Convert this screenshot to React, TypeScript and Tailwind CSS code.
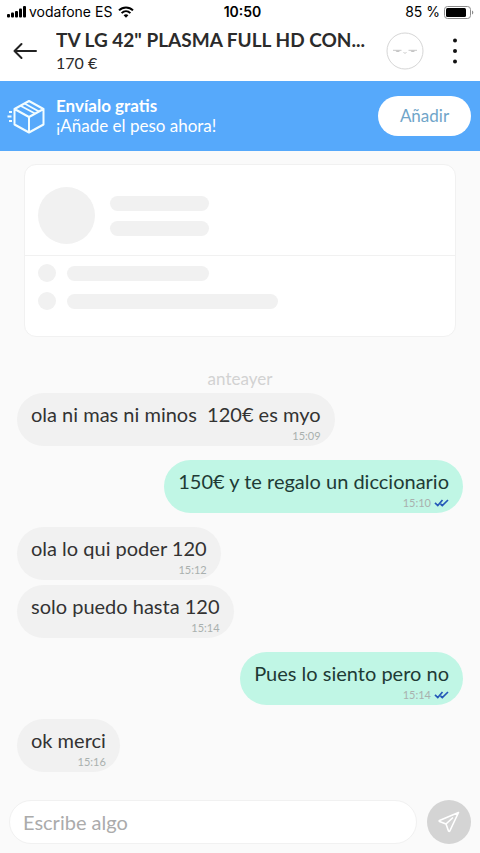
import React from 'react';
import clsx from 'clsx';

interface Message {
  id: number;
  text: string;
  time: string;
  mine: boolean;
}

const messages: Message[] = [
  { id: 1, text: 'ola ni mas ni minos  120€ es myo', time: '15:09', mine: false },
  { id: 2, text: '150€ y te regalo un diccionario', time: '15:10', mine: true },
  { id: 3, text: 'ola lo qui poder 120', time: '15:12', mine: false },
  { id: 4, text: 'solo puedo hasta 120', time: '15:14', mine: false },
  { id: 5, text: 'Pues lo siento pero no', time: '15:14', mine: true },
  { id: 6, text: 'ok merci', time: '15:16', mine: false },
];

const StatusBar: React.FC = () => (
  <div className="grid grid-cols-3 items-center h-6 pl-[7px] pr-[6px] text-sm text-black font-['Inter','Liberation_Sans',sans-serif]">
    <div className="flex items-center whitespace-nowrap">
      <svg className="w-[19px] h-3 mr-[3px]" viewBox="0 0 19 12" fill="currentColor" aria-hidden="true">
        <rect x="0" y="8" width="3" height="3.5" rx="1" />
        <rect x="4" y="6.5" width="3" height="5" rx="1" />
        <rect x="8" y="5" width="3" height="6.5" rx="1" />
        <rect x="12" y="2.5" width="3" height="9" rx="1" />
        <rect x="16" y="0" width="3" height="11.5" rx="1" />
      </svg>
      <span>vodafone ES</span>
      <svg className="w-4 h-3 ml-[6px]" viewBox="0 0 16 12" fill="none" stroke="currentColor" aria-hidden="true">
        <path d="M1 4.4C5 .4 11 .4 15 4.4" strokeWidth="2" />
        <path d="M3.6 7.1c2.6-2.5 6.2-2.5 8.8 0" strokeWidth="2" />
        <path d="M8 11.7 5.6 9.2c1.4-1.3 3.4-1.3 4.8 0z" fill="currentColor" stroke="none" />
      </svg>
    </div>
    <span className="pl-1 text-center font-semibold">10:50</span>
    <div className="flex items-center justify-end whitespace-nowrap">
      <span className="mr-1">85 %</span>
      <svg className="w-[30px] h-[13px]" viewBox="0 0 30 13" aria-hidden="true">
        <rect x=".5" y=".5" width="26" height="12" rx="3" fill="none" stroke="#8c8c8c" />
        <rect x="2" y="2" width="20" height="9" rx="1.5" fill="#000" />
        <path d="M28 4.5c1.8.6 1.8 3.4 0 4z" fill="#8c8c8c" />
      </svg>
    </div>
  </div>
);

const Header: React.FC = () => (
  <header className="flex items-center h-[57px] pl-3 pr-[14px] pb-1">
    <button type="button" aria-label="Volver" className="shrink-0 w-6 mr-5">
      <svg className="w-[26px] h-5" viewBox="0 0 26 20" fill="none" stroke="#222" strokeWidth="2" strokeLinecap="round" strokeLinejoin="round">
        <path d="M24 10H2.500M9.500 3 2.500 10l7 7" />
      </svg>
    </button>
    <div className="flex-1 min-w-0 text-[#2b2b2b]">
      <h1 className="text-[19px] leading-6 font-bold truncate">TV LG 42" PLASMA FULL HD CON...</h1>
      <p className="text-base leading-[22px]">170 €</p>
    </div>
    <svg className="shrink-0 w-[38px] h-[38px] ml-4" viewBox="0 0 38 38" fill="none" aria-hidden="true">
      <circle cx="19" cy="19" r="18" stroke="#d6d6d6" />
      <path d="M7 18.300h8.500M22.500 18.300H31" stroke="#c9c9c9" />
      <path d="M9.500 18.500h4.500c-.5 2-4 2-4.500 0zM24.500 18.500H29c-.5 2-4 2-4.500 0z" fill="#c4c4c4" />
      <path d="M17.500 20.500c.8.8 2.200.8 3 0" stroke="#c9c9c9" />
    </svg>
    <button type="button" aria-label="Más opciones" className="shrink-0 ml-5">
      <svg className="w-[22px] h-7" viewBox="0 0 22 28" fill="#111">
        <circle cx="11" cy="3.500" r="2" />
        <circle cx="11" cy="14" r="2" />
        <circle cx="11" cy="24.500" r="2" />
      </svg>
    </button>
  </header>
);

const ShippingBanner: React.FC = () => (
  <section className="flex items-center h-[70px] pl-[7px] pr-[9px] bg-[#56a9fb] text-white">
    <svg className="shrink-0 w-[38px] h-9 mr-[11px]" viewBox="0 0 38 36" fill="none" stroke="#f2fdff" strokeWidth="2" strokeLinejoin="round" aria-hidden="true">
      <path d="M22 3 36.500 11v15.500L22 34.500 7.500 26.500V11zM7.500 11 22 19l14.500-8M22 19v15.500" />
      <path d="M13.500 7.700 28 15.500M17.500 5.500l14.500 8" strokeWidth="1.700" />
      <path d="M2 14h3M.5 18.500h4M2 23h3" />
    </svg>
    <div className="flex-1 text-[17px] leading-5">
      <p className="font-bold">Envíalo gratis</p>
      <p>¡Añade el peso ahora!</p>
    </div>
    <button type="button" className="w-[93px] h-10 rounded-full bg-white text-[17px] text-[#70a5c9]">
      Añadir
    </button>
  </section>
);

// Placeholder shown while the item details are loading
const ItemSkeleton: React.FC = () => (
  <div className="mx-6 mt-[13px] rounded-xl border border-[#f1f1f1] bg-white">
    <div className="flex items-center h-[91px] px-[13px] pt-[11px] border-b border-[#f1f1f1]">
      <div className="w-[57px] h-[57px] rounded-full bg-[#f1f1f1]" />
      <div className="ml-[15px] flex flex-col gap-[10px]">
        <div className="w-[99px] h-[15px] rounded-full bg-[#f1f1f1]" />
        <div className="w-[99px] h-[15px] rounded-full bg-[#f1f1f1]" />
      </div>
    </div>
    <div className="flex flex-col gap-[10px] h-20 px-[13px] pt-2">
      <div className="flex items-center gap-[11px]">
        <div className="w-[18px] h-[18px] rounded-full bg-[#f1f1f1]" />
        <div className="w-[142px] h-[15px] rounded-full bg-[#f1f1f1]" />
      </div>
      <div className="flex items-center gap-[11px]">
        <div className="w-[18px] h-[18px] rounded-full bg-[#f1f1f1]" />
        <div className="w-[211px] h-[15px] rounded-full bg-[#f1f1f1]" />
      </div>
    </div>
  </div>
);

const ReadTicks: React.FC = () => (
  <svg className="w-[15px] h-[8px] ml-[3px]" viewBox="0 0 15 8" fill="none" stroke="#2458b8" strokeWidth="1.700" aria-label="Leído">
    <path d="M1 3.800 3.800 6.500 8.500 1M6.500 5l1.800 1.500L14 1" />
  </svg>
);

const MessageBubble: React.FC<{ message: Message; grouped: boolean }> = ({ message, grouped }) => (
  <li
    className={clsx(
      'flex flex-col px-[14px] pt-[7px] h-[53px] rounded-[27px]',
      message.mine ? 'self-end bg-[#c0f6e5] text-[#1e3b35]' : 'self-start bg-[#f1f1f1] text-[#333]',
      grouped ? 'mt-[5px]' : 'mt-[14px] first:mt-0'
    )}
  >
    <p className="text-xl leading-7 whitespace-pre">{message.text}</p>
    <p className="flex items-center justify-end text-[11px] leading-4 text-[#a9b0ae]">
      {message.time}
      {message.mine && <ReadTicks />}
    </p>
  </li>
);

const Composer: React.FC = () => (
  <form className="flex items-center gap-[10px] px-[9px] pb-[9px]" onSubmit={(e) => e.preventDefault()}>
    <input
      type="text"
      aria-label="Escribe algo"
      placeholder="Escribe algo"
      className="flex-1 min-w-0 h-11 px-[13px] rounded-full border border-[#f1f1f1] bg-white text-xl text-[#333] placeholder:text-[#ababab] outline-none"
    />
    <button type="submit" aria-label="Enviar" className="flex items-center justify-center shrink-0 w-11 h-11 rounded-full bg-[#d4d4d4]">
      <svg className="w-[22px] h-[22px]" viewBox="0 0 22 22" fill="none" stroke="#fff" strokeWidth="1.600" strokeLinejoin="round">
        <path d="M20.500 1.500 1.500 9.500Q.8 10 1.500 10.500L8 13l2.500 7q.7.800 1.300 0zM8 13l7-6.500" />
      </svg>
    </button>
  </form>
);

const App: React.FC = () => {
  return (
    <div className="flex flex-col min-h-screen bg-[#fafafa] font-['Lato','Noto_Sans',sans-serif]">
      <div className="bg-white">
        <StatusBar />
        <Header />
      </div>
      <ShippingBanner />
      <main className="flex-1">
        <ItemSkeleton />
        <p className="mt-8 text-center text-[17px] leading-5 text-[#d2d2d2]">anteayer</p>
        <ul className="flex flex-col mt-1 px-[17px]">
          {messages.map((message, i) => (
            <MessageBubble
              key={message.id}
              message={message}
              grouped={i > 0 && messages[i - 1].mine === message.mine}
            />
          ))}
        </ul>
      </main>
      <Composer />
    </div>
  );
};

export default App;
